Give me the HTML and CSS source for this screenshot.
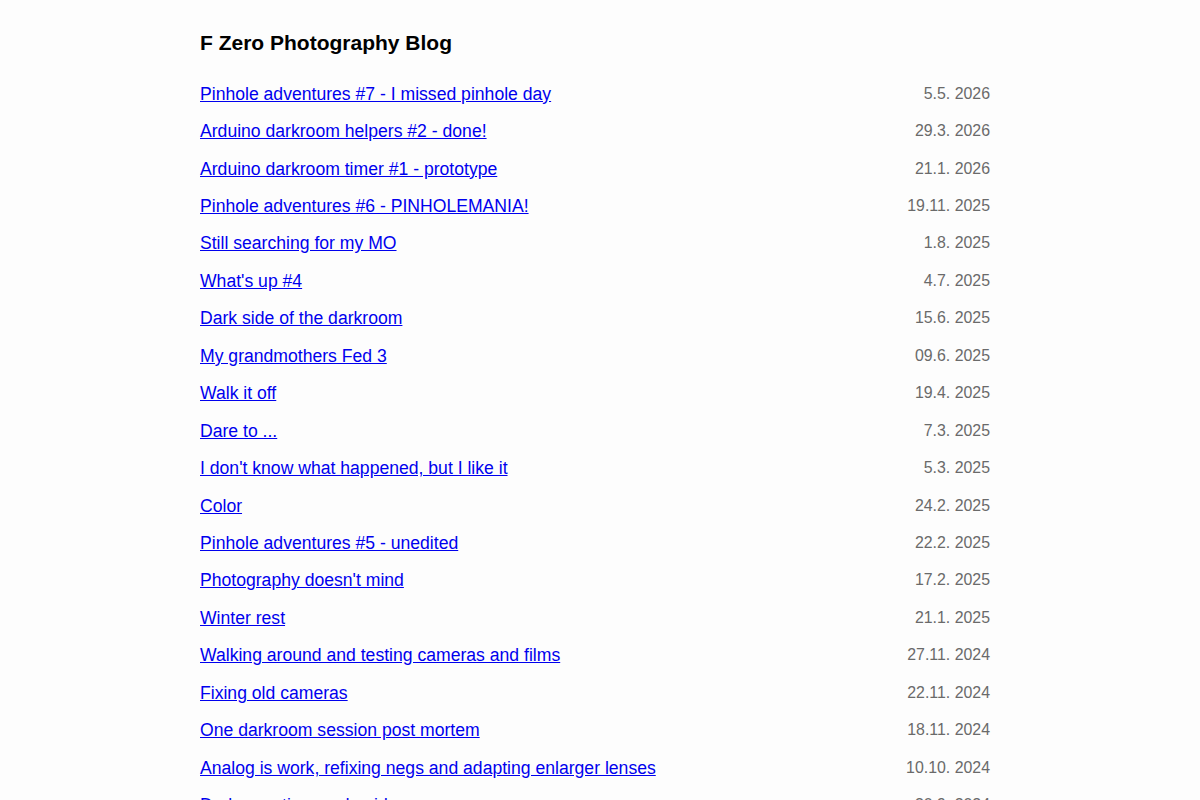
FILE: index.html
```html
<!DOCTYPE html>
<html lang="en">
<head>
  <meta charset="UTF-8">
  <meta name="viewport" content="width=device-width, initial-scale=1.0">
  <title>F Zero Photography Blog</title>
  <link rel="stylesheet" href="styles.css">
</head>
<body>
  <main class="blog">
    <h1 class="blog-title">F Zero Photography Blog</h1>
    <ul class="posts">
      <li class="post"><a href="#">Pinhole adventures #7 - I missed pinhole day</a><span class="date">5.5. 2026</span></li>
      <li class="post"><a href="#">Arduino darkroom helpers #2 - done!</a><span class="date">29.3. 2026</span></li>
      <li class="post"><a href="#">Arduino darkroom timer #1 - prototype</a><span class="date">21.1. 2026</span></li>
      <li class="post"><a href="#">Pinhole adventures #6 - PINHOLEMANIA!</a><span class="date">19.11. 2025</span></li>
      <li class="post"><a href="#">Still searching for my MO</a><span class="date">1.8. 2025</span></li>
      <li class="post"><a href="#">What's up #4</a><span class="date">4.7. 2025</span></li>
      <li class="post"><a href="#">Dark side of the darkroom</a><span class="date">15.6. 2025</span></li>
      <li class="post"><a href="#">My grandmothers Fed 3</a><span class="date">09.6. 2025</span></li>
      <li class="post"><a href="#">Walk it off</a><span class="date">19.4. 2025</span></li>
      <li class="post"><a href="#">Dare to ...</a><span class="date">7.3. 2025</span></li>
      <li class="post"><a href="#">I don't know what happened, but I like it</a><span class="date">5.3. 2025</span></li>
      <li class="post"><a href="#">Color</a><span class="date">24.2. 2025</span></li>
      <li class="post"><a href="#">Pinhole adventures #5 - unedited</a><span class="date">22.2. 2025</span></li>
      <li class="post"><a href="#">Photography doesn't mind</a><span class="date">17.2. 2025</span></li>
      <li class="post"><a href="#">Winter rest</a><span class="date">21.1. 2025</span></li>
      <li class="post"><a href="#">Walking around and testing cameras and films</a><span class="date">27.11. 2024</span></li>
      <li class="post"><a href="#">Fixing old cameras</a><span class="date">22.11. 2024</span></li>
      <li class="post"><a href="#">One darkroom session post mortem</a><span class="date">18.11. 2024</span></li>
      <li class="post"><a href="#">Analog is work, refixing negs and adapting enlarger lenses</a><span class="date">10.10. 2024</span></li>
      <li class="post"><a href="#">Darkroom time and guide</a><span class="date">30.9. 2024</span></li>
    </ul>
  </main>
</body>
</html>
```

FILE: styles.css
```css
* {
  margin: 0;
  padding: 0;
  box-sizing: border-box;
}

body {
  background-color: #fdfdfd;
  font-family: 'Liberation Sans', Arial, sans-serif;
  color: #111;
}

.blog {
  max-width: 800px;
  margin: 0 auto;
  padding: 30px 10px 40px 0;
}

.blog-title {
  font-size: 21px;
  line-height: 25px;
  font-weight: bold;
  color: #000;
  margin-bottom: 20.5px;
}

.posts {
  list-style: none;
}

.post {
  display: flex;
  justify-content: space-between;
  align-items: center;
  height: 37.45px;
}

.post a {
  font-size: 17.6px;
  color: #0000ee;
}

.date {
  font-size: 15.9px;
  color: #6a6a6a;
  margin-top: -1px;
}
```
